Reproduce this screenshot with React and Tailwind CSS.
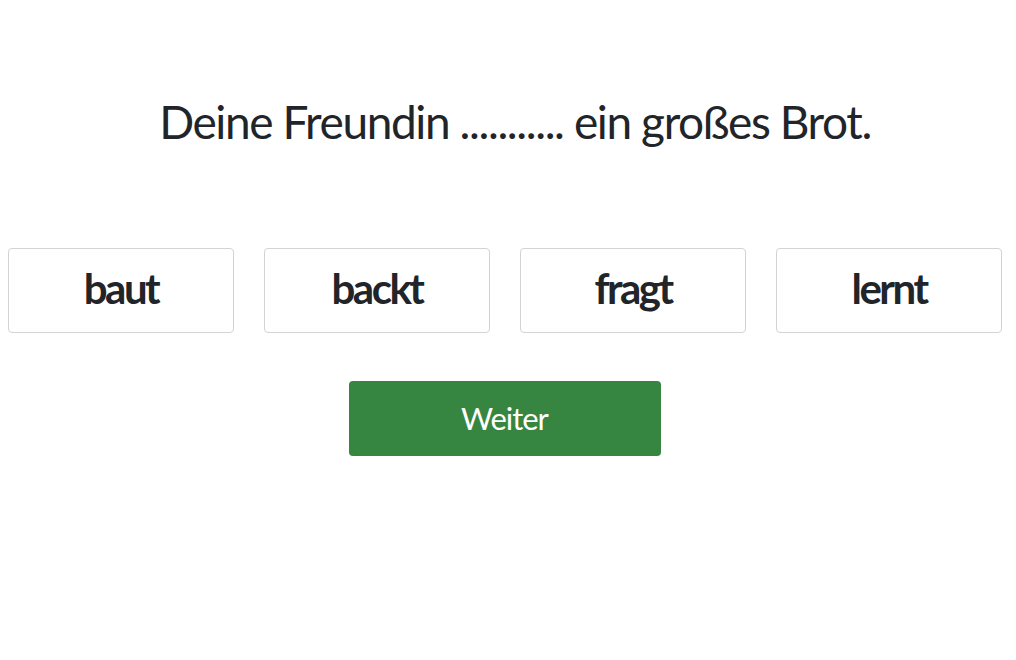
export default function App() {
  const options = ["baut", "backt", "fragt", "lernt"];

  return (
    <div className="min-h-[660px] bg-white text-[#212529]" style={{ fontFamily: "Lato, 'Noto Sans', sans-serif" }}>
      <div className="pt-[86px] text-center">
        <h1 className="text-[46px] leading-[72px] font-normal tracking-[-1.4px] pl-[14px]">
          Deine Freundin ........... ein großes Brot.
        </h1>
      </div>
      <div className="mt-[90px] flex gap-[30px] pl-[8px]">
        {options.map(o => (
          <button
            key={o}
            className="w-[226px] h-[85px] border border-[#d3d3d3] rounded-[4px] bg-white text-[42px] font-bold tracking-[-2.5px] text-[#212529] flex items-center justify-center pb-[4px]"
          >
            {o}
          </button>
        ))}
      </div>
      <div className="mt-[48px] flex justify-center pr-[7px]">
        <button className="w-[312px] h-[75px] rounded-[4px] bg-[#368540] text-white text-[31px] tracking-[-1px]">
          Weiter
        </button>
      </div>
    </div>
  );
}
